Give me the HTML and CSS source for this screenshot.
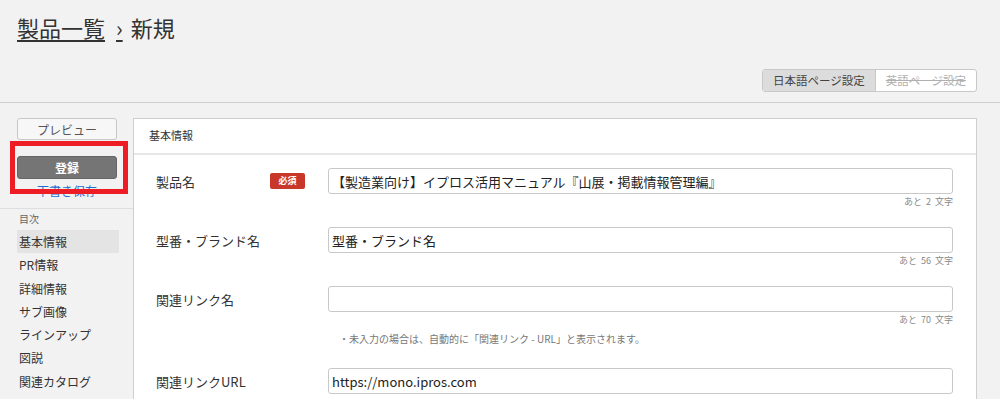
FILE: index.html
```html
<!DOCTYPE html>
<html lang="ja">
<head>
    <meta charset="UTF-8">
    <meta name="viewport" content="width=device-width, initial-scale=1.0">
    <title>製品一覧 › 新規</title>
    <link rel="stylesheet" href="styles.css">
</head>
<body>
    <!-- ヘッダー -->
    <div class="page-header">
        <h1 class="title">
            <a href="#" class="crumb">製品一覧</a><span class="crumb-sep">›</span><span>新規</span>
        </h1>
        <div class="lang-row">
            <div class="lang-toggle">
                <span class="lang-btn active">日本語ページ設定</span>
                <span class="lang-btn disabled">英語ページ設定</span>
            </div>
        </div>
    </div>

    <div class="content">
        <!-- サイドバー -->
        <div class="sidebar">
            <div class="actions">
                <button class="btn-preview">プレビュー</button>
                <button class="btn-submit">登録</button>
                <a href="#" class="draft-link">下書き保存</a>
                <div class="highlight-box"></div>
            </div>
            <div class="toc">
                <p class="toc-title">目次</p>
                <ul class="toc-list">
                    <li class="current">基本情報</li>
                    <li>PR情報</li>
                    <li>詳細情報</li>
                    <li>サブ画像</li>
                    <li>ラインアップ</li>
                    <li>図説</li>
                    <li>関連カタログ</li>
                </ul>
            </div>
        </div>

        <!-- 基本情報フォーム -->
        <div class="panel">
            <div class="panel-header">基本情報</div>
            <div class="panel-body">
                <div class="field">
                    <label class="field-label">製品名</label>
                    <span class="badge">必須</span>
                    <input class="field-input" type="text" value="【製造業向け】イプロス活用マニュアル『山展・掲載情報管理編』">
                    <p class="counter">あと 2 文字</p>
                </div>
                <div class="field">
                    <label class="field-label">型番・ブランド名</label>
                    <span></span>
                    <input class="field-input" type="text" value="型番・ブランド名">
                    <p class="counter">あと 56 文字</p>
                </div>
                <div class="field">
                    <label class="field-label">関連リンク名</label>
                    <span></span>
                    <input class="field-input" type="text" value="">
                    <p class="counter">あと 70 文字</p>
                    <p class="note">・未入力の場合は、自動的に「関連リンク - URL」と表示されます。</p>
                </div>
                <div class="field">
                    <label class="field-label">関連リンクURL</label>
                    <span></span>
                    <input class="field-input" type="text" value="https://mono.ipros.com">
                </div>
            </div>
        </div>
    </div>
</body>
</html>
```

FILE: styles.css
```css
* {
    margin: 0;
    padding: 0;
    box-sizing: border-box;
    font-family: "Noto Sans CJK JP", "Noto Sans", sans-serif;
}

body {
    background-color: #f2f2f2;
    color: #333;
}

/* ヘッダー */
.page-header {
    height: 103px;
    padding: 12px 23px 0 17px;
    border-bottom: 1px solid #cfcfcf;
}

.title {
    font-size: 22px;
    font-weight: normal;
    line-height: 30px;
    color: #333;
}

.crumb {
    color: #333;
    text-decoration: underline;
    text-underline-offset: 3px;
}

.crumb-sep {
    display: inline-block;
    margin: 0 8px 0 11px;
    text-decoration: underline;
    text-underline-offset: 3px;
}

.lang-row {
    display: flex;
    justify-content: flex-end;
    margin-top: 27px;
}

.lang-toggle {
    display: flex;
    border: 1px solid #c8c8c8;
    border-radius: 3px;
    overflow: hidden;
    background: #fff;
}

.lang-btn {
    height: 21px;
    line-height: 21px;
    font-size: 11.5px;
    padding: 0 10px;
}

.lang-btn.active {
    background-color: #dcdcdc;
    color: #444;
    border-right: 1px solid #c8c8c8;
}

.lang-btn.disabled {
    color: #b0b0b0;
    text-decoration: line-through;
}

/* レイアウト */
.content {
    display: flex;
    padding-top: 15px;
}

.sidebar {
    width: 133px;
    flex-shrink: 0;
}

.actions {
    position: relative;
    display: flex;
    flex-direction: column;
    align-items: flex-start;
    padding: 0 0 9px 17px;
    border-bottom: 1px solid #dedede;
}

.btn-preview,
.btn-submit {
    width: 100px;
    border-radius: 3px;
    font-size: 12px;
    cursor: pointer;
}

.btn-preview {
    height: 22px;
    background-color: #f7f7f7;
    border: 1px solid #c8c8c8;
    color: #555;
}

.btn-submit {
    height: 23px;
    margin-top: 16px;
    background-color: #757575;
    border: 1px solid #666;
    color: #fff;
    font-weight: bold;
}

.draft-link {
    width: 100px;
    margin-top: 4px;
    font-size: 12px;
    line-height: 16px;
    text-align: center;
    color: #1f6fd0;
    text-decoration: none;
}

/* 注目枠 */
.highlight-box {
    position: absolute;
    left: 10px;
    top: 23px;
    width: 118px;
    height: 53px;
    border: 5px solid #ee1c25;
}

.toc {
    padding: 4px 14px 0 17px;
}

.toc-title {
    font-size: 10px;
    line-height: 12px;
    color: #666;
    padding-left: 2px;
    margin-bottom: 5px;
}

.toc-list {
    list-style: none;
}

.toc-list li {
    height: 23.3px;
    line-height: 23.3px;
    font-size: 12px;
    padding-left: 2px;
    color: #333;
}

.toc-list li.current {
    background-color: #e4e4e4;
}

/* パネル */
.panel {
    width: 844px;
    background-color: #fff;
    border: 1px solid #cfcfcf;
    border-bottom: none;
}

.panel-header {
    height: 36px;
    line-height: 33px;
    padding-left: 15px;
    font-size: 11px;
    color: #333;
    border-bottom: 2px solid #e6e6e6;
}

.panel-body {
    padding: 13px 23px 0 22px;
}

.field {
    display: grid;
    grid-template-columns: 114px 58px 1fr;
    align-items: center;
    margin-bottom: 19px;
}

.field-label {
    font-size: 13px;
    color: #333;
}

.badge {
    width: 35px;
    height: 16px;
    line-height: 16px;
    text-align: center;
    background-color: #c8382a;
    color: #fff;
    font-size: 9px;
    font-weight: bold;
    border-radius: 2px;
}

.field-input {
    height: 26px;
    width: 100%;
    padding: 0 3px;
    border: 1px solid #c8c8c8;
    border-radius: 3px;
    font-size: 13px;
    color: #222;
    background: #fff;
}

.counter {
    grid-column: 3;
    text-align: right;
    font-size: 9px;
    line-height: 13px;
    margin-top: 1px;
    color: #888;
    word-spacing: 2px;
}

.note {
    grid-column: 3;
    font-size: 10px;
    line-height: 14px;
    margin: 6px 0 3px;
    padding-left: 11px;
    color: #777;
}
```
